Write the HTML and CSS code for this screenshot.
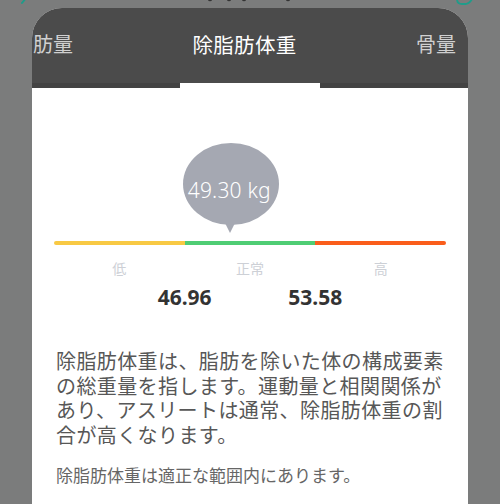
FILE: index.html
```html
<!DOCTYPE html>
<html>
    <head>
        <meta charset="utf-8">
        <link rel="stylesheet" href="styles.css">
    </head>
    <body>
        <div class="behind">
            <svg width="500" height="8" viewBox="0 0 500 8">
                <path d="M26 -2 L22 3" stroke="#1f9c8a" stroke-width="2" fill="none" stroke-linecap="round"/>
                <circle cx="210" cy="-1" r="2.2" fill="#333"/>
                <circle cx="229" cy="-1" r="2.2" fill="#333"/>
                <circle cx="244" cy="-1" r="2.2" fill="#333"/>
                <circle cx="288" cy="-1" r="2.2" fill="#333"/>
                <path d="M457 -1 Q457 4 462 4 L466 4 M466 4 Q470 3 472 -1" stroke="#1f9c8a" stroke-width="1.8" fill="none" stroke-linecap="round"/>
            </svg>
        </div>
        <div class="card">
            <div class="tabs">
                <div class="tab side left">肪量</div>
                <div class="tab active">除脂肪体重</div>
                <div class="tab side right">骨量</div>
            </div>
            <div class="tabline">
                <div class="line-dark"></div>
                <div class="line-active"></div>
                <div class="line-dark"></div>
            </div>
            <div class="content">
                <div class="gauge">
                    <div class="bubble-area">
                        <div class="bubble" style="left: 45.1%;">
                            <span>49.30 kg</span>
                        </div>
                    </div>
                    <div class="bar">
                        <div class="seg low"></div>
                        <div class="seg normal"></div>
                        <div class="seg high"></div>
                    </div>
                    <div class="labels">
                        <span>低</span>
                        <span>正常</span>
                        <span>高</span>
                    </div>
                    <div class="limits">
                        <span class="limit first">46.96</span>
                        <span class="limit second">53.58</span>
                    </div>
                </div>
                <p class="desc">除脂肪体重は、脂肪を除いた体の構成要素の総重量を指します。運動量と相関関係があり、アスリートは通常、除脂肪体重の割合が高くなります。</p>
                <p class="status">除脂肪体重は適正な範囲内にあります。</p>
            </div>
        </div>
    </body>
</html>
```

FILE: styles.css
```css
body {
    margin: 0;
    background-color: #7b7c7c;
    font-family: 'Noto Sans', 'Noto Sans CJK JP', sans-serif;
    overflow: hidden;
    height: 504px;
}
.behind {
    height: 8px;
    overflow: hidden;
}
.behind svg {
    display: block;
}
.card {
    margin-left: 32px;
    width: 436px;
    height: 496px;
    border-radius: 30px 30px 0 0;
    overflow: hidden;
    background-color: #ffffff;
}
.tabs {
    height: 75px;
    background-color: #4b4b4b;
    display: flex;
    align-items: center;
    justify-content: space-between;
    padding-bottom: 0;
}
.tab {
    font-family: 'Noto Sans CJK JP', sans-serif;
    font-size: 20px;
    line-height: 28px;
    margin-bottom: 3px;
}
.tab.side {
    color: #d0d0d0;
    width: 80px;
}
.tab.left {
    padding-left: 1px;
}
.tab.right {
    text-align: right;
    padding-right: 12px;
}
.tab.active {
    color: #ffffff;
    font-size: 20.5px;
    letter-spacing: 0.3px;
}
.tabline {
    display: flex;
    height: 5px;
}
.line-dark {
    flex: 1;
    background-color: #434343;
}
.line-active {
    width: 140px;
    background-color: #ffffff;
}
.content {
    padding: 0 22px 0 22px;
}
.gauge {
    padding-top: 55px;
}
.bubble-area {
    position: relative;
    height: 98px;
}
.bubble {
    position: absolute;
    top: 0;
    transform: translateX(-50%);
    width: 96px;
    height: 82px;
    border-radius: 50%;
    background-color: #a5a8b2;
    display: flex;
    align-items: center;
    justify-content: center;
}
.bubble::after {
    content: '';
    position: absolute;
    left: 42px;
    bottom: -8px;
    width: 0;
    height: 0;
    border-left: 5px solid transparent;
    border-right: 5px solid transparent;
    border-top: 10px solid #a5a8b2;
}
.bubble span {
    color: #ffffff;
    font-size: 21px;
    font-weight: 300;
    letter-spacing: 0.2px;
    margin-top: 11px;
    margin-left: -3px;
}
.bar {
    display: flex;
    height: 4px;
    border-radius: 2px;
    overflow: hidden;
}
.seg {
    flex: 1;
}
.low {
    background-color: #f8c944;
}
.normal {
    background-color: #4fcd74;
}
.high {
    background-color: #fa5d1b;
}
.labels {
    display: grid;
    grid-template-columns: 1fr 1fr 1fr;
    margin-top: 13px;
    font-family: 'Noto Sans CJK JP', sans-serif;
    font-size: 14px;
    line-height: 20px;
    color: #cdd0d6;
    text-align: center;
}
.limits {
    display: grid;
    grid-template-columns: 1fr 2fr 2fr 1fr;
    margin-top: 6px;
    font-size: 21px;
    font-weight: 700;
    line-height: 26px;
    color: #333333;
    text-align: center;
}
.limit.first {
    grid-column: 2;
}
.limit.second {
    grid-column: 3;
}
.desc {
    margin: 39px 0 0 2px;
    font-family: 'Noto Sans CJK JP', sans-serif;
    font-size: 20px;
    letter-spacing: 0.4px;
    line-height: 24.5px;
    color: #575757;
}
.status {
    margin: 16px 0 0 2px;
    font-family: 'Noto Sans CJK JP', sans-serif;
    font-size: 17px;
    line-height: 24px;
    color: #666666;
}
```
